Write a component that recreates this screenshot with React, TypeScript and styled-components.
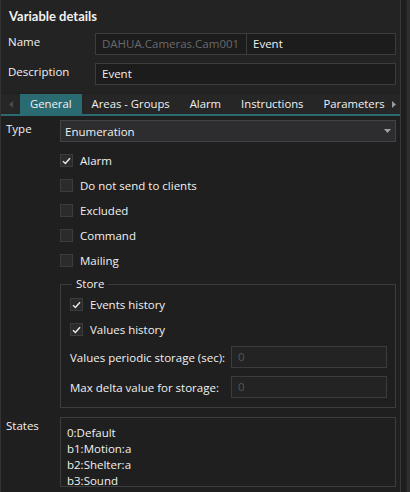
import React from "react";
import styled, { createGlobalStyle } from "styled-components";

const GlobalStyle = createGlobalStyle`
  html, body { margin: 0; padding: 0; background: #1f1f1f; }
  body { font-family: "Open Sans", "Noto Sans", sans-serif; font-size: 11.5px; color: #f1f1f1; }
  * { box-sizing: border-box; }
`;

const Frame = styled.div`
  width: 410px;
  height: 492px;
  display: flex;
  background: #1f1f1f;
  overflow: hidden;
`;

const Panel = styled.div`
  width: 401px;
  height: 492px;
  border-left: 1px solid #333;
  border-right: 1px solid #3a3a3d;
  display: flex;
  flex-direction: column;
  background: #1f1f1f;
`;

const ScrollStrip = styled.div`
  width: 9px;
  height: 492px;
  background: #262626;
  border-right: 3px solid #2e2e2e;
  border-left: 5px solid #1e1e1e;
`;

const Header = styled.div`
  background: #232323;
  padding: 6px 4px 0 7px;
  display: flex;
  flex-direction: column;
`;

const Title = styled.div`
  font-family: "Lato", "Open Sans", sans-serif;
  font-weight: 700;
  font-size: 13px;
  height: 20px;
  line-height: 20px;
  margin-bottom: 7px;
  padding-left: 1px;
`;

const FieldRow = styled.div`
  display: flex;
  align-items: flex-start;
  height: 22px;
  margin-bottom: 8px;
`;

const FieldLabel = styled.div<{ $w: number }>`
  width: ${(p) => p.$w}px;
  flex: none;
  line-height: 18px;
`;

const TextBox = styled.div<{ $w?: number; $disabled?: boolean; $joined?: boolean }>`
  ${(p) => (p.$w ? `width: ${p.$w}px; flex: none;` : "flex: 1;")}
  height: 22px;
  border: 1px solid #3c3c3f;
  ${(p) => (p.$joined ? "border-left-width: 0;" : "")}
  background: #1c1c1c;
  color: ${(p) => (p.$disabled ? "#6a6a6a" : "#f1f1f1")};
  padding: 0 6px;
  line-height: 20px;
  white-space: nowrap;
  overflow: hidden;
`;

const Tabs = styled.div`
  display: flex;
  align-items: stretch;
  height: 22px;
  background: #262626;
  border-bottom: 2px solid #2a6b72;
  margin-top: 1px;
`;

const TabArrow = styled.div<{ $dim?: boolean; $w: number }>`
  width: ${(p) => p.$w}px;
  flex: none;
  display: flex;
  align-items: center;
  justify-content: center;
  svg { fill: ${(p) => (p.$dim ? "#4a4a4a" : "#9a9a9a")}; }
`;

const Tab = styled.div<{ $active?: boolean }>`
  padding: 0 10px;
  line-height: 20px;
  font-size: 11.3px;
  background: ${(p) => (p.$active ? "#2a6b72" : "transparent")};
  white-space: nowrap;
  flex: none;
`;

const TabTrack = styled.div`
  flex: 1;
  display: flex;
  overflow: hidden;
`;

const Body = styled.div`
  padding: 4px 4px 0 5px;
  display: flex;
  flex-direction: column;
`;

const Row = styled.div`
  display: flex;
  align-items: flex-start;
`;

const Dropdown = styled.div`
  flex: 1;
  height: 22px;
  border: 1px solid #434346;
  background: #2d2d30;
  display: flex;
  align-items: center;
  justify-content: space-between;
  padding: 0 4px 0 4px;
`;

const Checks = styled.div`
  margin-left: 54px;
  padding-top: 12px;
  display: flex;
  flex-direction: column;
  gap: 12px;
`;

const CheckRow = styled.div`
  display: flex;
  align-items: center;
  height: 13px;
  gap: 7px;
`;

const Box = styled.div`
  width: 13px;
  height: 13px;
  border: 1px solid #3c3c3f;
  background: #2b2b2b;
  display: flex;
  align-items: center;
  justify-content: center;
`;

const Group = styled.fieldset`
  margin: 11px 0 0 54px;
  width: 336px;
  border: 1px solid #3c3c3f;
  padding: 6px 8px 9px 9px;
  display: flex;
  flex-direction: column;
`;

const Legend = styled.legend`
  padding: 0 4px;
  margin-left: 2px;
  line-height: 12px;
`;

const GroupChecks = styled.div`
  display: flex;
  flex-direction: column;
  gap: 12px;
  margin-top: 2px;
  margin-bottom: 2px;
`;

const StoreRow = styled.div`
  display: flex;
  align-items: center;
  height: 22px;
  margin-top: 8px;
`;

const StoreLabel = styled.div`
  width: 161px;
  flex: none;
`;

const SmallBox = styled.div`
  width: 156px;
  height: 22px;
  border: 1px solid #3c3c3f;
  background: #232323;
  color: #555;
  padding: 0 6px;
  line-height: 20px;
`;

const StatesRow = styled.div`
  display: flex;
  align-items: flex-start;
  margin-top: 9px;
`;

const StatesArea = styled.div`
  flex: 1;
  height: 70px;
  border: 1px solid #3c3c3f;
  background: #1f1f1f;
  padding: 7px 6px;
  line-height: 16px;
`;

const Check = ({ checked }: { checked?: boolean }) => (
  <Box>
    {checked && (
      <svg width="9" height="8" viewBox="0 0 9 8">
        <path d="M1 4.2 L3.4 6.5 L8 1.2" stroke="#e8e8e8" strokeWidth="1.5" fill="none" />
      </svg>
    )}
  </Box>
);

const CheckItem = ({ label, checked }: { label: string; checked?: boolean }) => (
  <CheckRow>
    <Check checked={checked} />
    <span>{label}</span>
  </CheckRow>
);

export default function App() {
  return (
    <>
      <GlobalStyle />
      <Frame>
        <Panel>
          <Header>
            <Title>Variable details</Title>
            <FieldRow>
              <FieldLabel $w={87}>Name</FieldLabel>
              <TextBox $w={152} $disabled>DAHUA.Cameras.Cam001</TextBox>
              <TextBox $joined>Event</TextBox>
            </FieldRow>
            <FieldRow>
              <FieldLabel $w={87}>Description</FieldLabel>
              <TextBox>Event</TextBox>
            </FieldRow>
          </Header>
          <Tabs>
            <TabArrow $dim $w={19}>
              <svg width="4" height="7" viewBox="0 0 4 7"><path d="M4 0 L0 3.5 L4 7 Z" /></svg>
            </TabArrow>
            <TabTrack>
              <Tab $active>General</Tab>
              <Tab>Areas - Groups</Tab>
              <Tab>Alarm</Tab>
              <Tab>Instructions</Tab>
              <Tab>Parameters</Tab>
            </TabTrack>
            <TabArrow $w={13}>
              <svg width="4" height="7" viewBox="0 0 4 7"><path d="M0 0 L4 3.5 L0 7 Z" /></svg>
            </TabArrow>
          </Tabs>
          <Body>
            <Row>
              <FieldLabel $w={54}>Type</FieldLabel>
              <Dropdown>
                <span>Enumeration</span>
                <svg width="7" height="5" viewBox="0 0 7 5"><path d="M0 0 H7 L3.5 4 Z" fill="#a0a0a0" /></svg>
              </Dropdown>
            </Row>
            <Checks>
              <CheckItem label="Alarm" checked />
              <CheckItem label="Do not send to clients" />
              <CheckItem label="Excluded" />
              <CheckItem label="Command" />
              <CheckItem label="Mailing" />
            </Checks>
            <Group>
              <Legend>Store</Legend>
              <GroupChecks>
                <CheckItem label="Events history" checked />
                <CheckItem label="Values history" checked />
              </GroupChecks>
              <StoreRow>
                <StoreLabel>Values periodic storage (sec):</StoreLabel>
                <SmallBox>0</SmallBox>
              </StoreRow>
              <StoreRow>
                <StoreLabel>Max delta value for storage:</StoreLabel>
                <SmallBox>0</SmallBox>
              </StoreRow>
            </Group>
            <StatesRow>
              <FieldLabel $w={54}>States</FieldLabel>
              <StatesArea>
                <div>0:Default</div>
                <div>b1:Motion:a</div>
                <div>b2:Shelter:a</div>
                <div>b3:Sound</div>
              </StatesArea>
            </StatesRow>
          </Body>
        </Panel>
        <ScrollStrip />
      </Frame>
    </>
  );
}
